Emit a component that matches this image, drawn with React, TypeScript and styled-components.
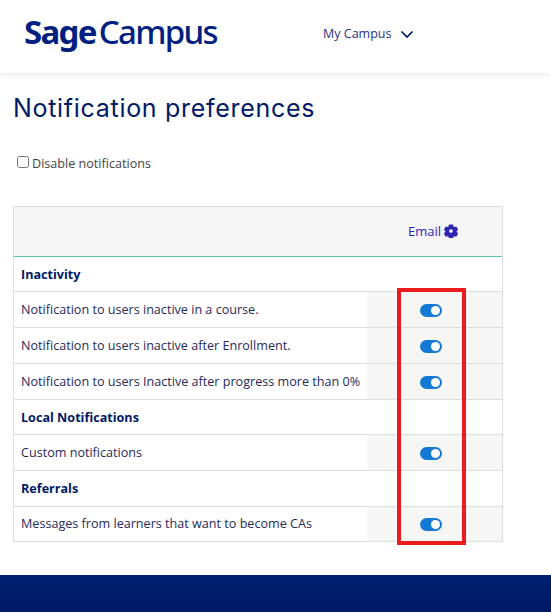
import React from 'react'
import styled, { createGlobalStyle } from 'styled-components'

const GlobalStyle = createGlobalStyle`
  html, body {
    margin: 0;
    padding: 0;
    background: #fff;
    overflow: hidden;
  }
  body {
    font-family: "Open Sans", "Liberation Sans", sans-serif;
    color: #001a67;
  }
`

const sections = [
  {
    title: 'Inactivity',
    rows: [
      'Notification to users inactive in a course.',
      'Notification to users inactive after Enrollment.',
      'Notification to users Inactive after progress more than 0%',
    ],
  },
  { title: 'Local Notifications', rows: ['Custom notifications'] },
  { title: 'Referrals', rows: ['Messages from learners that want to become CAs'] },
]

const App = () => {
  return (
    <Page>
      <GlobalStyle />
      <Header>
        <Logo>
          <strong>Sage</strong>
          <span>Campus</span>
        </Logo>
        <NavItem>
          My Campus
          <svg width="14" height="9" viewBox="0 0 14 9" fill="none">
            <path d="M1.5 1.5 7 7l5.5-5.5" stroke="#001a67" strokeWidth="1.7" />
          </svg>
        </NavItem>
      </Header>
      <Main>
        <Title>Notification preferences</Title>
        <DisableLabel>
          <input type="checkbox" />
          Disable notifications
        </DisableLabel>
        <TableWrap>
          <Table>
            <HeadRow>
              <HeadCell>
                Email
                <svg width="14" height="14" viewBox="0 0 24 24" fill="#2f25b5">
                  <path
                    fillRule="evenodd"
                    d="M8.5 1h7l.8 3.300 1.500.9 3.300-1 3.200 5.600-2.500 2.300v1.800l2.500 2.300-3.200 5.600-3.300-1-1.500.9-.8 3.300h-7l-.8-3.300-1.500-.9-3.300 1L-.3 16.200l2.500-2.300v-1.800L-.3 9.800 2.900 4.200l3.300 1 1.500-.9zM12 8.800a3.200 3.200 0 1 0 0 6.400 3.200 3.200 0 0 0 0-6.400z"
                  />
                </svg>
              </HeadCell>
            </HeadRow>
            {sections.map((section) => (
              <React.Fragment key={section.title}>
                <SectionRow>{section.title}</SectionRow>
                {section.rows.map((row) => (
                  <Row key={row}>
                    <RowLabel>{row}</RowLabel>
                    <ToggleCell>
                      <Toggle />
                    </ToggleCell>
                  </Row>
                ))}
              </React.Fragment>
            ))}
          </Table>
          <Highlight />
        </TableWrap>
      </Main>
      <Footer />
    </Page>
  )
}

const Page = styled.div`
  width: 551px;
  height: 612px;
  display: flex;
  flex-direction: column;
  overflow: hidden;
`

const Header = styled.header`
  height: 73px;
  flex: none;
  display: flex;
  align-items: flex-start;
  box-shadow: 0 1px 6px rgba(0, 0, 0, 0.1);
`

const Logo = styled.div`
  width: 323px;
  padding: 11px 0 0 24px;
  box-sizing: border-box;
  font-family: "Noto Sans", "Open Sans", sans-serif;
  font-size: 33px;
  line-height: 42px;
  letter-spacing: -1.7px;
  color: #001f80;

  strong {
    font-weight: 700;
    margin-right: 3px;
  }

  span {
    font-weight: 500;
  }
`

const NavItem = styled.div`
  display: flex;
  align-items: center;
  gap: 9px;
  margin-top: 24px;
  font-size: 12.5px;
  line-height: 19px;
  color: #1f3580;

  svg {
    margin-top: 2px;
  }
`

const Main = styled.main`
  flex: 1;
  padding: 0 0 0 13px;
`

const Title = styled.h1`
  margin: 20px 0 0;
  font-family: Inter, "Open Sans", sans-serif;
  font-size: 25px;
  line-height: 30px;
  font-weight: 400;
  letter-spacing: 0.7px;
  color: #001a67;
`

const DisableLabel = styled.label`
  display: flex;
  align-items: center;
  margin: 30px 0 0 4px;
  height: 20px;
  font-size: 12.6px;
  color: #444;

  input {
    width: 12px;
    height: 12px;
    margin: 0 3px 2px 0;
  }
`

const TableWrap = styled.div`
  position: relative;
  width: 490px;
  margin-top: 33px;
`

const Table = styled.div`
  border: 1px solid #ddd;
  box-sizing: border-box;
  display: flex;
  flex-direction: column;
`

const HeadRow = styled.div`
  height: 49px;
  display: flex;
  justify-content: flex-end;
  align-items: center;
  background: #f6f6f6;
  border-bottom: 1px solid #5cc8ab;
`

const HeadCell = styled.div`
  display: flex;
  align-items: center;
  gap: 3px;
  width: 94px;
  margin-bottom: 2px;
  font-size: 13px;
  color: #2f25b5;
`

const SectionRow = styled.div`
  height: 34.2px;
  display: flex;
  align-items: center;
  padding-left: 7px;
  border-bottom: 1px solid #ddd;
  font-size: 12.6px;
  font-weight: 700;
  color: #001a67;
`

const Row = styled.div`
  height: 35px;
  display: flex;
  border-bottom: 1px solid #ddd;

  &:last-child {
    border-bottom: none;
    height: 34.5px;
  }
`

const RowLabel = styled.div`
  width: 353px;
  padding-left: 7px;
  box-sizing: border-box;
  display: flex;
  align-items: center;
  font-size: 12.6px;
  color: #1f2a5c;
  white-space: nowrap;
`

const ToggleCell = styled.div`
  flex: 1;
  display: flex;
  align-items: center;
  background: #f6f6f6;
  padding-left: 53px;
`

const Toggle = styled.span`
  position: relative;
  display: block;
  width: 22px;
  height: 13px;
  margin-top: 2px;
  border-radius: 7px;
  background: #1479d4;

  &::after {
    content: '';
    position: absolute;
    top: 2px;
    right: 2px;
    width: 9px;
    height: 9px;
    border-radius: 50%;
    background: #fff;
  }
`

const Highlight = styled.div`
  position: absolute;
  left: 384px;
  top: 82px;
  width: 69px;
  height: 257px;
  box-sizing: border-box;
  border: 4px solid #ec1c1c;
  pointer-events: none;
`

const Footer = styled.footer`
  height: 37px;
  flex: none;
  background: linear-gradient(#002070, #001865);
`

export default App
